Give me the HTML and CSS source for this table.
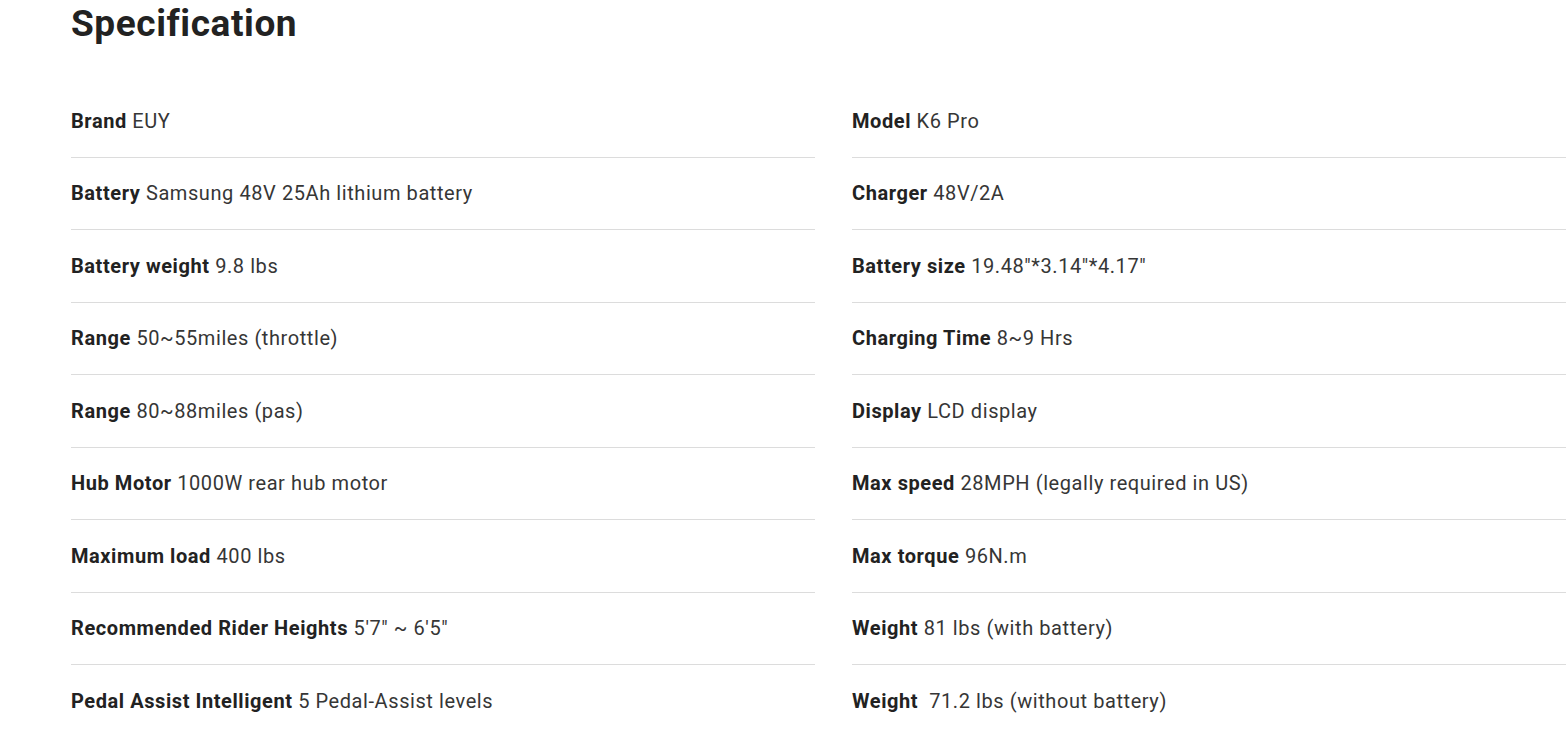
FILE: index.html
```html
<!DOCTYPE html>
<html lang="en">
<head>
<meta charset="utf-8">
<title>Specification</title>
<link rel="stylesheet" href="styles.css">
</head>
<body>
<section class="spec">
  <h2 class="spec-title">Specification</h2>
  <div class="spec-grid">
    <div class="spec-row"><strong>Brand</strong> EUY</div>
    <div class="spec-row"><strong>Model</strong> K6 Pro</div>
    <div class="spec-row"><strong>Battery</strong> Samsung 48V 25Ah lithium battery</div>
    <div class="spec-row"><strong>Charger</strong> 48V/2A</div>
    <div class="spec-row"><strong>Battery weight</strong> 9.8 lbs</div>
    <div class="spec-row"><strong>Battery size</strong> 19.48"*3.14"*4.17"</div>
    <div class="spec-row"><strong>Range</strong> 50~55miles (throttle)</div>
    <div class="spec-row"><strong>Charging Time</strong> 8~9 Hrs</div>
    <div class="spec-row"><strong>Range</strong> 80~88miles (pas)</div>
    <div class="spec-row"><strong>Display</strong> LCD display</div>
    <div class="spec-row"><strong>Hub Motor</strong> 1000W rear hub motor</div>
    <div class="spec-row"><strong>Max speed</strong> 28MPH (legally required in US)</div>
    <div class="spec-row"><strong>Maximum load</strong> 400 lbs</div>
    <div class="spec-row"><strong>Max torque</strong> 96N.m</div>
    <div class="spec-row"><strong>Recommended Rider Heights</strong> 5'7" ~ 6'5"</div>
    <div class="spec-row"><strong>Weight</strong> 81 lbs (with battery)</div>
    <div class="spec-row"><strong>Pedal Assist Intelligent</strong> 5 Pedal-Assist levels</div>
    <div class="spec-row"><strong>Weight</strong> &nbsp;71.2 lbs (without battery)</div>
  </div>
</section>
</body>
</html>
```
FILE: styles.css
```css
html, body {
  margin: 0;
  padding: 0;
  background: #fff;
  overflow: hidden;
}
body {
  font-family: Roboto, "Liberation Sans", Arial, sans-serif;
  color: #333;
  letter-spacing: 0.036em;
}
.spec {
  margin-left: 71px;
  width: 1525px;
}
.spec-title {
  margin: 0;
  padding-top: 1px;
  font-size: 37px;
  font-weight: 700;
  line-height: 46px;
  color: #222;
  height: 84px;
}
.spec-grid {
  display: grid;
  grid-template-columns: 1fr 1fr;
  column-gap: 37px;
}
.spec-row {
  font-size: 20px;
  line-height: 30px;
  padding: 20.75px 0 20.75px;
  border-bottom: 1px solid #dcdcdc;
  color: #363636;
  font-weight: 400;
}
.spec-row strong {
  font-weight: 700;
  color: #222;
}
```
